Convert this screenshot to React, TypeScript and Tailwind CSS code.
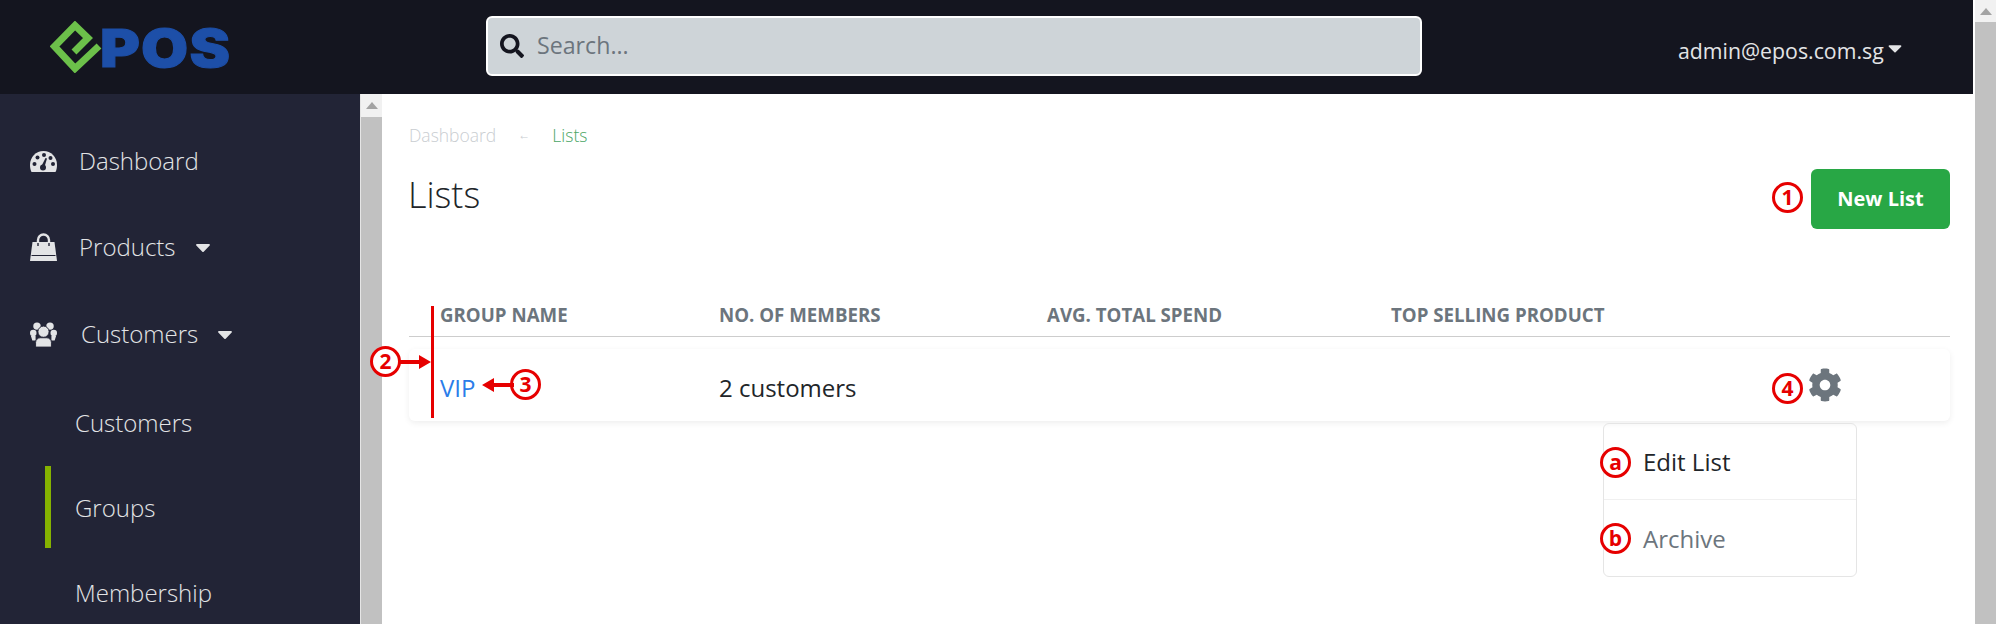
import { FaCaretDown, FaCog, FaSearch } from 'react-icons/fa';

function Marker({ label, className }: { label: string; className: string }) {
  return (
    <span
      className={`absolute flex h-[31px] w-[31px] items-center justify-center rounded-full border-[3px] border-[#e60000] bg-white text-[21px] leading-none font-bold text-[#e60000] ${className}`}
    >
      {label}
    </span>
  );
}

function Arrow({ className, left }: { className: string; left?: boolean }) {
  return (
    <svg className={`absolute ${className}`} width="32" height="14" viewBox="0 0 32 14" aria-hidden>
      {left ? (
        <path d="M0 7 12 0v5h20v4H12v5z" fill="#e60000" />
      ) : (
        <path d="M32 7 20 0v5H0v4h20v5z" fill="#e60000" />
      )}
    </svg>
  );
}

function GaugeIcon() {
  return (
    <svg width="27" height="21" viewBox="0 0 27 21" aria-hidden>
      <path d="M13.5 0C6 0 0 6 0 14c0 2.500.5 5 1.500 7h24c1-2 1.500-4.500 1.500-7C27 6 21 0 13.500 0z" fill="#e3e4e6" />
      <g fill="#222436">
        <circle cx="4.5" cy="13" r="2" />
        <circle cx="7.5" cy="6.5" r="2" />
        <circle cx="14" cy="4" r="2" />
        <circle cx="20.5" cy="7" r="2" />
        <circle cx="23" cy="13" r="2" />
        <circle cx="13" cy="16.5" r="3" />
        <path d="M11.500 15 15.500 7l1.500.6-2.600 8.600z" />
      </g>
    </svg>
  );
}

function BagIcon() {
  return (
    <svg width="27" height="28" viewBox="0 0 27 28" aria-hidden>
      <path d="M8 11V7a5.500 5.500 0 0 1 11 0v4" fill="none" stroke="#e3e4e6" strokeWidth="2.4" />
      <path d="M2.500 9h22L27 28H0z" fill="#e3e4e6" />
      <path d="M1.500 22.500h24" stroke="#222436" strokeWidth="1" />
      <path d="M8 10v3M19 10v3" stroke="#222436" strokeWidth="1.4" />
    </svg>
  );
}

function UsersIcon() {
  return (
    <svg width="29" height="27" viewBox="0 0 29 27" aria-hidden>
      <g fill="#e3e4e6">
        <circle cx="7.5" cy="4.5" r="4" />
        <circle cx="21.5" cy="4.5" r="4" />
        <circle cx="3.5" cy="12" r="3.5" />
        <circle cx="25.5" cy="12" r="3.5" />
        <path d="M1 15h5v5H2.500z M23 15h5l-1.500 5H23z" />
      </g>
      <circle cx="14.5" cy="10.5" r="6" fill="#e3e4e6" stroke="#222436" strokeWidth="1" />
      <path d="M6 27v-5c0-3 2.500-5 5-5h7c2.500 0 5 2 5 5v5z" fill="#e3e4e6" stroke="#222436" strokeWidth="1" />
    </svg>
  );
}

function SideItem({ icon, label, caret, textClass }: { icon: React.ReactNode; label: string; caret?: boolean; textClass?: string }) {
  return (
    <div className="flex h-[86px] items-center pl-[30px] text-[24px] font-light text-[#e3e4e6]">
      <span className="flex w-[27px] justify-center text-[#e3e4e6]">{icon}</span>
      <span className={textClass ?? 'ml-[22px]'}>{label}</span>
      {caret && <FaCaretDown className="ml-[15px] text-[24px]" />}
    </div>
  );
}

function SubItem({ label, active }: { label: string; active?: boolean }) {
  return (
    <div className="relative flex h-[85px] items-center pl-[75px] text-[24px] font-light text-[#e3e4e6]">
      {active && <span className="absolute top-[1px] left-[45px] h-[82px] w-[6px] bg-[#85b200]" />}
      {label}
    </div>
  );
}

export default function App() {
  return (
    <div className="relative flex h-[624px] w-[1996px] overflow-hidden bg-white font-['Open_Sans',sans-serif]">
      <div className="flex min-w-0 flex-1 flex-col">
        <header className="flex h-[94px] shrink-0 items-center bg-[#14151f]">
          <div className="flex w-[486px] items-center pl-[50px]">
            <svg width="52" height="52" viewBox="0 0 52 52" aria-hidden>
              <path d="M49 25 25 47.500 4.500 25.500 25 4.500 38 17 24 31" fill="none" stroke="#6cc04a" strokeWidth="7" />
            </svg>
            <span className="mt-[3px] -ml-[2px] origin-left scale-x-[1.17] text-[52px] leading-none font-black tracking-[1px] text-[#1d4fa8] [font-family:Inter,sans-serif] [-webkit-text-stroke:1px_#1d4fa8]">POS</span>
          </div>
          <div className="mb-[3px] flex h-[60px] w-[936px] items-center rounded-md border-2 border-white bg-[#ced4d8] pl-[12px] text-[23.2px] text-[#6c757d]">
            <FaSearch className="text-[24px] text-[#14151f]" />
            <span className="ml-[13px]">Search...</span>
          </div>
          <div className="mt-[7px] ml-[256px] flex items-center text-[21.3px] text-[#e3e4e6]">
            admin@epos.com.sg
            <FaCaretDown className="mb-[5px] text-[22px]" />
          </div>
        </header>
        <div className="flex min-h-0 flex-1">
          <aside className="w-[360px] shrink-0 bg-[#222436] pt-[24px]">
            <SideItem icon={<GaugeIcon />} label="Dashboard" />
            <SideItem icon={<BagIcon />} label="Products" caret />
            <div className="pt-[1px]">
              <SideItem icon={<UsersIcon />} label="Customers" caret textClass="ml-[24px]" />
            </div>
            <div className="pt-[3px]">
              <SubItem label="Customers" />
              <SubItem label="Groups" active />
              <SubItem label="Membership" />
            </div>
          </aside>
          <div className="flex w-[22px] shrink-0 flex-col border-l border-[#e5e5e5]">
            <div className="flex h-[23px] items-center justify-center bg-[#f1f1f1]">
              <span className="h-0 w-0 border-x-[6px] border-b-[7px] border-x-transparent border-b-[#a3a3a3]" />
            </div>
            <div className="flex-1 bg-[#c1c1c1]" />
          </div>
          <main className="relative min-w-0 flex-1 pt-[33px] pr-[23px] pl-[27px]">
            <div className="flex h-[16px] items-center text-[17.5px] font-light">
              <span className="text-[#c9cdd1]">Dashboard</span>
              <span className="mx-[22px] text-[12px] text-[#c9cdd1]">←</span>
              <span className="text-[#4aa564]">Lists</span>
            </div>
            <div className="flex items-start justify-between pt-[22px]">
              <h1 className="-ml-[1px] text-[36px] leading-[60px] font-light text-[#212529]">Lists</h1>
              <button className="mt-[4px] h-[60px] w-[139px] rounded-md bg-[#28a745] text-[20px] font-bold text-white">New List</button>
            </div>
            <div className="mt-[58px] flex h-[50px] items-start border-b border-[#cdcdcd] pt-[15px] text-[18.7px] leading-[25px] font-bold text-[#6c757d]">
              <span className="w-[310px] pl-[31px]">GROUP NAME</span>
              <span className="w-[328px]">NO. OF MEMBERS</span>
              <span className="w-[344px]">AVG. TOTAL SPEND</span>
              <span>TOP SELLING PRODUCT</span>
            </div>
            <div className="mt-[12px] flex h-[72px] items-center rounded-md text-[24px] text-[#212529] shadow-[0_2px_6px_rgba(0,0,0,0.07)]">
              <span className="w-[310px] pt-[5px] pl-[31px] text-[#2b7de9]">VIP</span>
              <span className="pt-[5px]">2 customers</span>
              <FaCog className="mr-[108px] ml-auto text-[34px] text-[#6c757d]" />
            </div>
            <div className="absolute top-[329px] left-[1221px] w-[254px] rounded-md border border-[#e5e5e5] text-[24px]">
              <div className="flex h-[76px] items-center border-b border-[#f0f0f0] pl-[39px] text-[#212529]">Edit List</div>
              <div className="flex h-[76px] items-center pt-[2px] pl-[39px] text-[#6c757d]">Archive</div>
            </div>
            <span className="absolute top-[212px] left-[49px] h-[112px] w-[3px] bg-[#e60000]" />
            <Marker label="1" className="top-[88px] left-[1390px]" />
            <Marker label="2" className="top-[252px] left-[-12px]" />
            <Arrow className="top-[261px] left-[17px]" />
            <Marker label="3" className="top-[275px] left-[128px]" />
            <Arrow left className="top-[284px] left-[100px]" />
            <Marker label="4" className="top-[279px] left-[1390px]" />
            <Marker label="a" className="top-[353px] left-[1218px]" />
            <Marker label="b" className="top-[429px] left-[1218px]" />
          </main>
        </div>
      </div>
      <div className="flex w-[23px] shrink-0 flex-col pl-[2px]">
        <div className="flex h-[22px] items-center justify-center bg-[#f1f1f1]">
          <span className="h-0 w-0 border-x-[6px] border-b-[7px] border-x-transparent border-b-[#a3a3a3]" />
        </div>
        <div className="flex-1 bg-[#c1c1c1]" />
      </div>
    </div>
  );
}
